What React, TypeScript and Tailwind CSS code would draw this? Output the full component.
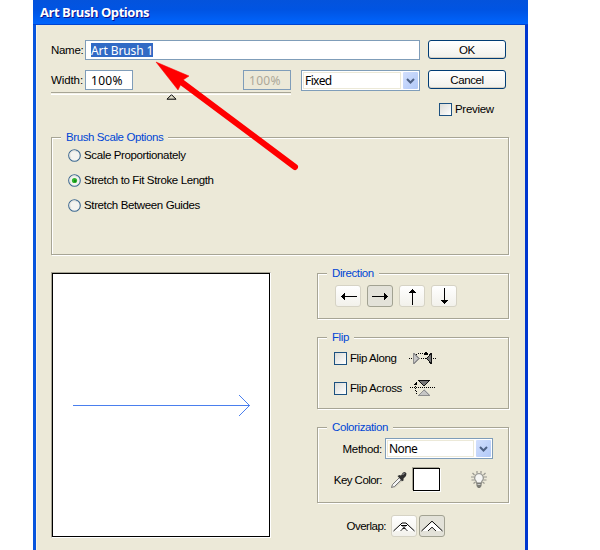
import React, { useState } from 'react';

const DIRECTIONS = ['left', 'right', 'up', 'down'] as const;

const ROTATION: Record<string, number> = { right: 0, down: 90, left: 180, up: 270 };

interface GroupProps {
  title: string;
  className: string;
  children: React.ReactNode;
}

// Etched group box with its title sitting on the top edge
const Group: React.FC<GroupProps> = ({ title, className, children }) => (
  <div
    className={`border border-[#a7a595] shadow-[1px_1px_0_#fff,inset_1px_1px_0_#fff] ${className}`}
  >
    <div className="-mt-[9px] ml-[9px] h-4 w-fit bg-[#ece9d8] px-[5px] leading-4 text-[#0046d5]">
      {title}
    </div>
    <div className="pt-px">{children}</div>
  </div>
);

const Radio = ({ checked }: { checked: boolean }) => (
  <svg width="13" height="13" viewBox="0 0 13 13">
    <circle cx="6.5" cy="6.5" r="5.8" fill="#f4f4f0" stroke="#3b6790" strokeWidth="1.1" />
    <path d="M3 9a4.2 4.2 0 0 1 6-6" fill="none" stroke="#dcdcd7" />
    {checked && <circle cx="6.5" cy="6.5" r="2.6" fill="#2fb32f" />}
    {checked && <circle cx="7" cy="7" r="1.2" fill="#159015" />}
  </svg>
);

const Checkbox = () => (
  <div className="h-[13px] w-[13px] shrink-0 border border-[#1c5180] bg-linear-to-br from-[#dcdcd7] to-white" />
);

const Select = ({ value, className }: { value: string; className: string }) => (
  <div
    className={`flex h-[21px] items-center justify-between border border-[#7f9db9] bg-white p-px font-['Noto_Sans','Liberation_Sans',sans-serif] text-[12px] tracking-[-0.6px] ${className}`}
  >
    <div className="flex h-[17px] flex-1 items-center border border-[#ece9d8] pl-px">{value}</div>
    <div className="ml-[2px] flex h-[17px] w-[15px] items-center justify-center rounded-[1px] bg-linear-to-br from-[#d2dffd] to-[#b1c9f8]">
      <svg width="9" height="6" viewBox="0 0 9 6">
        <path d="M1 1l3.5 3.5L8 1" fill="none" stroke="#4d6185" strokeWidth="2" />
      </svg>
    </div>
  </div>
);

const Button = ({ children }: { children: string }) => (
  <button className="flex h-[19px] w-[78px] items-center justify-center rounded-[3px] border border-[#003c74] bg-linear-to-b from-white to-[#f0f0ea] shadow-[inset_0_-1px_0_#d6d0c5]">
    {children}
  </button>
);

interface ToolButtonProps {
  active: boolean;
  onClick: () => void;
  children: React.ReactNode;
}

const ToolButton: React.FC<ToolButtonProps> = ({ active, onClick, children }) => (
  <button
    onClick={onClick}
    className={`flex h-[22px] w-[26px] items-center justify-center rounded-[3px] border ${
      active
        ? 'border-[#a2a292] bg-[#e3e2d9]'
        : 'border-[#d6d3c5] bg-linear-to-b from-white to-[#f2f1eb]'
    }`}
  >
    {children}
  </button>
);

const Arrow = ({ angle }: { angle: number }) => (
  <svg width="17" height="17" viewBox="0 0 17 17" shapeRendering="crispEdges">
    <g transform={`rotate(${angle} 8.5 8.5)`}>
      <path d="M0 8h13v1H0z" />
      <path d="M12 5h1v1h1v1h1v1h1v1h-1v1h-1v1h-1v1h-1z" />
    </g>
  </svg>
);

const FlipAlongIcon = () => (
  <svg width="28" height="14" viewBox="0 0 28 14" shapeRendering="crispEdges">
    <path d="M0 7.5h28" stroke="#000" strokeDasharray="1 1" />
    <path d="M5 2l6 5.5L5 13z" fill="#c6c6c6" />
    <path d="M4.5 2v11M5 2.5l5 5-5 5" fill="none" stroke="#8e8e8e" />
    <path d="M22 2l-5 5.5L22 13z" fill="#777" />
    <path d="M22.5 2v11M22 2.5l-4.5 5 4.5 5" fill="none" stroke="#111" />
    <path d="M7 3.5h2M9 2.5h8" stroke="#000" strokeDasharray="1 1" />
    <path d="M16 1h2v1h1v2h-4V2h1z" />
  </svg>
);

const FlipAcrossIcon = () => (
  <svg width="26" height="16" viewBox="0 0 26 16" shapeRendering="crispEdges">
    <path d="M8 .5h12l-6 6z" fill="#777" />
    <path d="M8 .5h12M9 1l5 5 5-5" fill="none" stroke="#111" />
    <path d="M14 9l6 6H8z" fill="#c6c6c6" />
    <path d="M8 15.5h12M9 15l5-5 5 5" fill="none" stroke="#8e8e8e" />
    <path d="M0 7.5h26" stroke="#000" strokeDasharray="1 1" />
    <path d="M5 3h1V2h1v3H4V4h1z" />
    <path d="M5.5 6v5M6.5 11v3" stroke="#000" strokeDasharray="1 1" />
  </svg>
);

const Eyedropper = () => (
  <svg width="18" height="18" viewBox="0 0 18 18">
    <path d="M4 16.5l9-8" stroke="#cfccbd" strokeWidth="1.5" />
    <path d="M1.500 16.500l1-3 7-7 2 2-7 7z" fill="#f4f4f4" stroke="#666" strokeWidth=".9" />
    <path d="M7.500 5l2-1 1.500.5 2-3L15 1l1.500 1.500L16 5l-2.500 2.500v2l-1.500.7z" fill="#303030" />
    <path d="M12.500 4l2-2" stroke="#aaa" />
  </svg>
);

const Bulb = () => (
  <svg width="18" height="18" viewBox="0 0 18 18">
    <path
      d="M7 0v2.500M11 0v2.500M2.500 2l2 2M15.500 2l-2 2M1 6h3M14 6h3M1.500 9h3M13.500 9h3M3.500 12.500l2-1.500M14.500 12.500l-2-1.500"
      stroke="#98978f"
      strokeWidth="1.200"
    />
    <path d="M9 2.500a4.500 4.500 0 0 0-2.700 8L7 13h4l.7-2.500A4.500 4.500 0 0 0 9 2.500z" fill="#f6f6f4" stroke="#9a9a94" strokeWidth="1.200" />
    <path d="M6.500 11.500h5V15L10 17H8l-1.500-2z" fill="#7d7d76" />
    <path d="M7.500 13.500h3" stroke="#ccc" />
  </svg>
);

const OverlapIcon = ({ crossed }: { crossed: boolean }) => (
  <svg width="22" height="12" viewBox="0 0 22 12">
    {crossed ? (
      <>
        <path d="M1 11l8-8h4l8 8h-6l-4-4-4 4z" fill="#fff" />
        <path d="M.5 11L8 4l1-1h4l1 1 7.500 7" fill="none" stroke="#000" />
        <path d="M8 5.500h6" stroke="#000" />
        <path d="M9.500 6l5 5M12.500 6l-5 5M9.500 8.500h3" fill="none" stroke="#000" strokeWidth=".8" />
      </>
    ) : (
      <>
        <path d="M1 11L11 1.500 21 11h-5.500L11 7l-4.500 4z" fill="#fff" />
        <path d="M.5 11L11 1.200 21.500 11" fill="none" stroke="#000" />
        <path d="M7 11l4-3.800L15 11" fill="none" stroke="#000" strokeWidth=".9" />
      </>
    )}
  </svg>
);

const SCALE_OPTIONS = ['Scale Proportionately', 'Stretch to Fit Stroke Length', 'Stretch Between Guides'];

export default function App() {
  const [scale, setScale] = useState(1);
  const [direction, setDirection] = useState('right');
  const [overlap, setOverlap] = useState(1);

  return (
    <div className="relative h-[550px] w-[600px] overflow-hidden bg-white font-['Liberation_Sans',Arial,sans-serif] text-[11.5px] leading-4 tracking-[-0.4px] whitespace-nowrap text-black">
      <div className="ml-[33px] flex h-full w-[495px] flex-col">
        {/* Title bar */}
        <div className="flex h-[25px] items-center bg-linear-to-b from-[#0453dc] via-[#0054e3] via-40% to-[#0066ff] pb-px pl-[7px] font-['Open_Sans','Liberation_Sans',sans-serif] text-[13px] font-bold tracking-[-0.45px] text-white shadow-[inset_0_-1px_0_#0044d0] [text-shadow:1px_1px_0_#0f1089]">
          Art Brush Options
        </div>

        <div className="flex-1 border-r-3 border-l-3 border-r-[#0037cf] border-l-[#0855dd] bg-[#ece9d8] pt-[15px] pr-[16px] pl-[15px] shadow-[inset_1px_0_0_#f7f5e8]">
          <div className="flex h-[97px]">
            <div className="w-[369px]">
              <div className="flex h-5 items-center">
                <span className="w-[34px] tracking-[-0.3px]">Name:</span>
                <div className="flex h-5 flex-1 items-center border border-[#7f9db9] bg-white pl-[5px] font-['Noto_Sans','DejaVu_Sans',sans-serif] text-[12px] tracking-[-0.1px]">
                  <span className="h-[14px] bg-[#316ac5] leading-[15px] text-white">Art Brush 1</span>
                </div>
              </div>
              <div className="mt-[10px] flex h-[21px] items-start">
                <span className="w-[34px] pt-[2px] tracking-[-0.1px]">Width:</span>
                <div className="flex h-5 w-[48px] items-center border border-[#7f9db9] bg-white pt-px pl-[5px] font-['Noto_Sans','DejaVu_Sans',sans-serif] text-[12px] tracking-[0.3px]">
                  100%
                </div>
                <div className="ml-[110px] flex h-5 w-[48px] items-center border border-[#7f9db9] pt-px pl-[5px] font-['Noto_Sans','DejaVu_Sans',sans-serif] text-[12px] tracking-[0.3px] text-[#aca899]">
                  100%
                </div>
                <Select value="Fixed" className="ml-[10px] w-[119px]" />
              </div>
              {/* Width slider */}
              <div className="mt-px w-[240px]">
                <div className="h-[3px] border-t border-b border-t-[#a7a595] border-b-white bg-[#f4f2e8]" />
                <svg className="-mt-px ml-[115px]" width="11" height="6" viewBox="0 0 11 6">
                  <path d="M5.5.7L1 5.2h9z" fill="#dcd9c6" stroke="#000" strokeWidth="1" />
                </svg>
              </div>
            </div>
            <div className="ml-2 flex w-[78px] flex-col">
              <Button>OK</Button>
              <div className="h-[11px]" />
              <Button>Cancel</Button>
              <div className="mt-[12px] ml-[11px] flex items-center gap-[3px]">
                <Checkbox />
                <span className="tracking-[-0.3px]">Preview</span>
              </div>
            </div>
          </div>

          <Group title="Brush Scale Options" className="h-[118px] w-[458px]">
            <div className="ml-[16px] flex flex-col gap-[9px] pt-px">
              {SCALE_OPTIONS.map((label, i) => (
                <div key={label} className="flex h-4 items-center gap-[3px] tracking-[-0.37px]" onClick={() => setScale(i)}>
                  <Radio checked={scale === i} />
                  <span>{label}</span>
                </div>
              ))}
            </div>
          </Group>

          <div className="mt-[17px] flex justify-between">
            {/* Stroke preview */}
            <div className="h-[266px] w-[220px] border border-t-[#a7a595] border-r-white border-b-white border-l-[#a7a595]">
              <div className="h-full border border-black bg-white">
                <svg width="216" height="262" viewBox="0 0 216 262">
                  <path d="M20 131.5h177" stroke="#4a7fee" />
                  <path d="M186 121l10.5 10.5L186 142" fill="none" stroke="#4a7fee" />
                </svg>
              </div>
            </div>

            <div className="flex w-[192px] flex-col pt-px">
              <Group title="Direction" className="h-[46px]">
                <div className="ml-[17px] flex gap-[6px] pt-[3px]">
                  {DIRECTIONS.map((d) => (
                    <ToolButton key={d} active={direction === d} onClick={() => setDirection(d)}>
                      <Arrow angle={ROTATION[d]} />
                    </ToolButton>
                  ))}
                </div>
              </Group>

              <Group title="Flip" className="mt-[18px] h-[72px]">
                <div className="ml-[16px] flex h-6 items-center">
                  <Checkbox />
                  <span className="ml-[3px] w-[59px]">Flip Along</span>
                  <FlipAlongIcon />
                </div>
                <div className="mt-[6px] ml-[16px] flex h-6 items-center">
                  <Checkbox />
                  <span className="ml-[3px] w-[60px]">Flip Across</span>
                  <FlipAcrossIcon />
                </div>
              </Group>

              <Group title="Colorization" className="mt-[18px] h-[76px]">
                <div className="mt-[2px] flex items-center">
                  <span className="w-[64px] text-right tracking-[-0.3px]">Method:</span>
                  <Select value="None" className="ml-[3px] w-[108px]" />
                </div>
                <div className="mt-[9px] flex items-center">
                  <span className="w-[64px] text-right tracking-[-0.55px]">Key Color:</span>
                  <div className="ml-[8px]">
                    <Eyedropper />
                  </div>
                  <div className="ml-[5px] h-[23px] w-[27px] border border-black bg-white shadow-[-1px_-1px_0_#a7a595,1px_1px_0_#fff]" />
                  <div className="ml-[30px]">
                    <Bulb />
                  </div>
                </div>
              </Group>

              <div className="mt-[12px] flex items-center">
                <span className="w-[69px] text-right tracking-[-0.5px]">Overlap:</span>
                <div className="ml-[5px] flex gap-[2px]">
                  {[0, 1].map((i) => (
                    <ToolButton key={i} active={overlap === i} onClick={() => setOverlap(i)}>
                      <OverlapIcon crossed={i === 0} />
                    </ToolButton>
                  ))}
                </div>
              </div>
            </div>
          </div>
        </div>
      </div>

      {/* Pointer drawn over the dialog */}
      <svg className="pointer-events-none absolute top-[55px] left-[150px]" width="155" height="120" viewBox="150 55 155 120">
        <path d="M180 81l115 86" stroke="#f00" strokeWidth="6" strokeLinecap="round" />
        <path d="M156 62l33 14-6 4-5 10z" fill="#f00" stroke="#f00" strokeWidth=".5" />
      </svg>
    </div>
  );
}
